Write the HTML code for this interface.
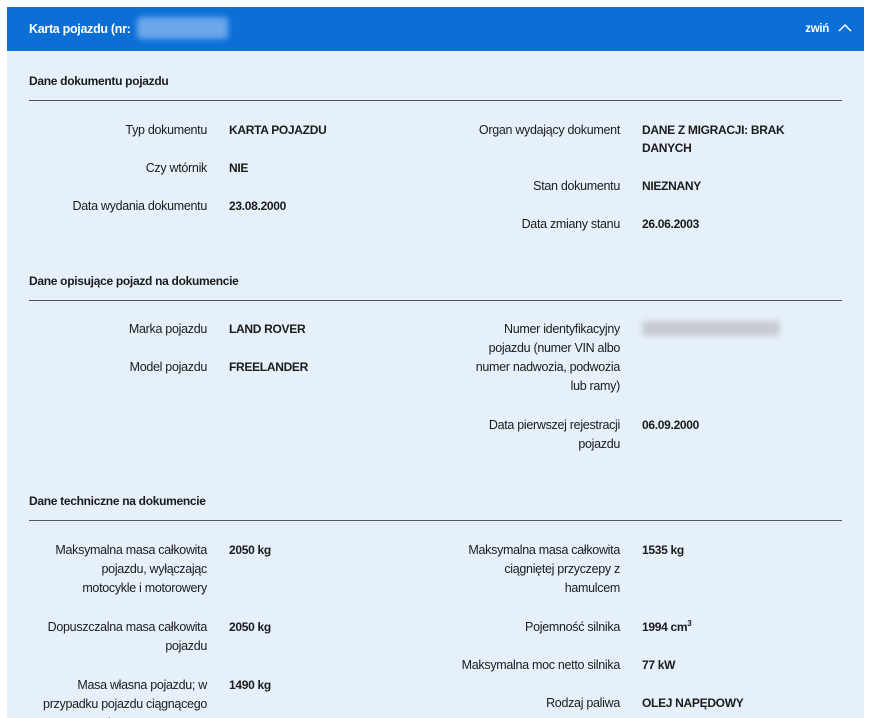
<!DOCTYPE html>
<html><head><meta charset="utf-8"><style>
html{overflow:hidden;height:718px}
body{margin:0;width:871px;height:718px;overflow:hidden;background:#fff;font-family:"Liberation Sans",sans-serif;font-size:12.5px;letter-spacing:-0.3px;color:#1b1b1b;position:relative}
.hdr{position:absolute;left:7px;top:7px;width:857px;height:44px;background:#0b6fd6;color:#fff}
.body{position:absolute;left:7px;top:51px;width:857px;height:667px;background:#e6f0fa}
.a{position:absolute;line-height:19px;white-space:nowrap}
.l{text-align:right;width:190px;left:17px}
.r{text-align:right;width:200px;left:420px}
.v{font-weight:bold;left:229px;font-size:12px}
.v2{font-weight:bold;left:642px;font-size:12px}
.h{position:absolute;left:29px;font-weight:bold;font-size:12px}
.line{position:absolute;left:29px;width:813px;height:1px;background:#555}
</style></head><body>
<div class="hdr">
<div style="position:absolute;left:22px;top:15px;font-weight:bold;font-size:12.5px">Karta pojazdu (nr:</div>
<div style="position:absolute;left:130px;top:10px;width:91px;height:22px;background:#6aa8ea;filter:blur(3px);border-radius:4px"></div>
<div style="position:absolute;right:35px;top:16px;font-weight:bold;font-size:11.5px">zwiń</div>
<svg style="position:absolute;right:12px;top:16px" width="14" height="10"><path d="M1 8 L7 2 L13 8" stroke="#fff" stroke-width="1.5" fill="none"/></svg>
</div>
<div class="body"></div>
<div class="h" style="top:74px">Dane dokumentu pojazdu</div>
<div class="line" style="top:100px"></div>
<div class="a l" style="top:121px">Typ dokumentu</div><div class="a v" style="top:121px">KARTA POJAZDU</div>
<div class="a l" style="top:159px">Czy wtórnik</div><div class="a v" style="top:159px">NIE</div>
<div class="a l" style="top:197px">Data wydania dokumentu</div><div class="a v" style="top:197px">23.08.2000</div>
<div class="a r" style="top:121px">Organ wydający dokument</div><div class="a v2" style="top:121px;line-height:18px">DANE Z MIGRACJI: BRAK<br>DANYCH</div>
<div class="a r" style="top:177px">Stan dokumentu</div><div class="a v2" style="top:177px">NIEZNANY</div>
<div class="a r" style="top:215px">Data zmiany stanu</div><div class="a v2" style="top:215px">26.06.2003</div>

<div class="h" style="top:274px">Dane opisujące pojazd na dokumencie</div>
<div class="line" style="top:300px"></div>
<div class="a l" style="top:320px">Marka pojazdu</div><div class="a v" style="top:320px">LAND ROVER</div>
<div class="a l" style="top:358px">Model pojazdu</div><div class="a v" style="top:358px">FREELANDER</div>
<div class="a r" style="top:320px">Numer identyfikacyjny<br>pojazdu (numer VIN albo<br>numer nadwozia, podwozia<br>lub ramy)</div>
<div style="position:absolute;left:642px;top:321px;width:138px;height:15px;background:#c6cbd1;filter:blur(3px);border-radius:4px"></div>
<div class="a r" style="top:416px">Data pierwszej rejestracji<br>pojazdu</div><div class="a v2" style="top:416px">06.09.2000</div>

<div class="h" style="top:494px">Dane techniczne na dokumencie</div>
<div class="line" style="top:520px"></div>
<div class="a l" style="top:541px">Maksymalna masa całkowita<br>pojazdu, wyłączając<br>motocykle i motorowery</div><div class="a v" style="top:541px">2050 kg</div>
<div class="a l" style="top:618px">Dopuszczalna masa całkowita<br>pojazdu</div><div class="a v" style="top:618px">2050 kg</div>
<div class="a l" style="top:676px">Masa własna pojazdu; w<br>przypadku pojazdu ciągnącego<br>do naczepy – masa</div><div class="a v" style="top:676px">1490 kg</div>
<div class="a r" style="top:541px">Maksymalna masa całkowita<br>ciągniętej przyczepy z<br>hamulcem</div><div class="a v2" style="top:541px">1535 kg</div>
<div class="a r" style="top:618px">Pojemność silnika</div><div class="a v2" style="top:618px">1994 cm<sup style="font-size:8px;line-height:0">3</sup></div>
<div class="a r" style="top:656px">Maksymalna moc netto silnika</div><div class="a v2" style="top:656px">77 kW</div>
<div class="a r" style="top:694px">Rodzaj paliwa</div><div class="a v2" style="top:694px">OLEJ NAPĘDOWY</div>
</body></html>
